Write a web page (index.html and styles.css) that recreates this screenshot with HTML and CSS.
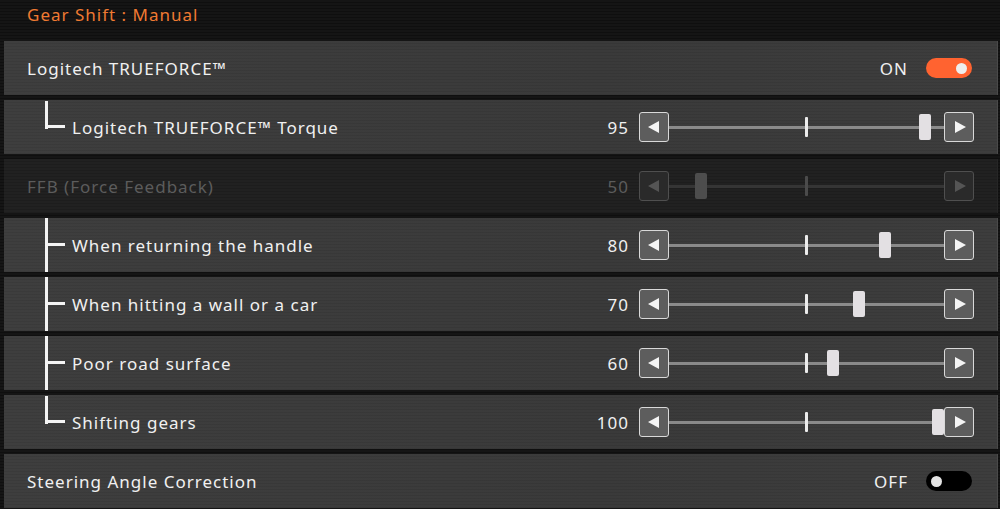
FILE: index.html
```html
<!DOCTYPE html>
<html lang="en">
<head>
<meta charset="utf-8">
<title>Gear Shift</title>
<link rel="stylesheet" href="styles.css">
</head>
<body>
<div class="screen">
  <div class="header">Gear Shift : Manual</div>
  <div class="list">
    <div class="row">
      <span class="label">Logitech TRUEFORCE™</span>
      <div class="toggle-wrap"><span class="state">ON</span><span class="toggle on"><span class="dot"></span></span></div>
    </div>
    <div class="row sub">
      <span class="tree last"></span>
      <span class="label">Logitech TRUEFORCE™ Torque</span>
      <div class="slider"><span class="value">95</span><span class="btn left"></span><span class="track"><span class="tick"></span><span class="thumb" style="--v:95"></span></span><span class="btn right"></span></div>
    </div>
    <div class="row disabled">
      <span class="label">FFB (Force Feedback)</span>
      <div class="slider"><span class="value">50</span><span class="btn left"></span><span class="track"><span class="tick"></span><span class="thumb" style="--v:10"></span></span><span class="btn right"></span></div>
    </div>
    <div class="row sub">
      <span class="tree mid"></span>
      <span class="label">When returning the handle</span>
      <div class="slider"><span class="value">80</span><span class="btn left"></span><span class="track"><span class="tick"></span><span class="thumb" style="--v:80"></span></span><span class="btn right"></span></div>
    </div>
    <div class="row sub">
      <span class="tree mid"></span>
      <span class="label">When hitting a wall or a car</span>
      <div class="slider"><span class="value">70</span><span class="btn left"></span><span class="track"><span class="tick"></span><span class="thumb" style="--v:70"></span></span><span class="btn right"></span></div>
    </div>
    <div class="row sub">
      <span class="tree mid"></span>
      <span class="label">Poor road surface</span>
      <div class="slider"><span class="value">60</span><span class="btn left"></span><span class="track"><span class="tick"></span><span class="thumb" style="--v:60"></span></span><span class="btn right"></span></div>
    </div>
    <div class="row sub">
      <span class="tree last"></span>
      <span class="label">Shifting gears</span>
      <div class="slider"><span class="value">100</span><span class="btn left"></span><span class="track"><span class="tick"></span><span class="thumb" style="--v:100"></span></span><span class="btn right"></span></div>
    </div>
    <div class="row">
      <span class="label">Steering Angle Correction</span>
      <div class="toggle-wrap"><span class="state">OFF</span><span class="toggle off"><span class="dot"></span></span></div>
    </div>
  </div>
</div>
</body>
</html>
```

FILE: styles.css
```css
* { box-sizing: border-box; }
html, body {
  margin: 0;
  padding: 0;
  width: 1000px;
  height: 509px;
  overflow: hidden;
  background: #121212;
}
.screen {
  width: 1000px;
  height: 509px;
  font-family: "Noto Sans", "DejaVu Sans", sans-serif;
  font-size: 17px;
  color: #f0f0f0;
  background: repeating-linear-gradient(to bottom, #151515 0, #151515 2px, #0f0f0f 2px, #0f0f0f 3px);
}
.header {
  height: 41px;
  padding: 3px 0 0 27px;
  line-height: 24px;
  color: #f07a32;
  letter-spacing: 1px;
}
.list {
  display: flex;
  flex-direction: column;
  gap: 5px;
  padding: 0 2px 0 4px;
}
.row {
  height: 54px;
  display: flex;
  align-items: center;
  padding: 0 23px 0 23px;
  background:
    repeating-linear-gradient(to bottom, rgba(0,0,0,0) 0, rgba(0,0,0,0) 2px, rgba(0,0,0,0.07) 2px, rgba(0,0,0,0.07) 3px),
    linear-gradient(to right, #3e3e3e, #3a3a3a 60%, #3d3d3d);
  border-right: 1px solid #4a4a4a;
}
.label {
  flex: 1;
  letter-spacing: 1px;
  white-space: nowrap;
}
.row.sub { padding-left: 41px; }
.tree {
  align-self: stretch;
  width: 27px;
  position: relative;
  flex: none;
}
.tree::before {
  content: "";
  position: absolute;
  left: 0;
  top: 0;
  width: 3px;
  background: #f4f4f4;
}
.tree::after {
  content: "";
  position: absolute;
  left: 0;
  top: 25px;
  width: 20px;
  height: 3px;
  background: #f4f4f4;
}
.tree.mid::before { bottom: 0; }
.tree.last::before { height: 28px; top: 1px; }

/* slider */
.slider {
  display: flex;
  align-items: center;
  height: 30px;
}
.value {
  width: 48px;
  text-align: right;
  margin-right: 10px;
  letter-spacing: 1px;
}
.btn {
  width: 30px;
  height: 30px;
  border: 1.5px solid #d9d9d9;
  border-radius: 3px;
  background: #5d5d5d;
  display: flex;
  align-items: center;
  justify-content: center;
  flex: none;
  position: relative;
  z-index: 1;
}
.btn::after {
  content: "";
  width: 0;
  height: 0;
  border-top: 6.5px solid transparent;
  border-bottom: 6.5px solid transparent;
}
.btn.left::after { border-right: 11px solid #f4f4f4; margin-right: 2px; }
.btn.right::after { border-left: 11px solid #f4f4f4; margin-left: 2px; }
.track {
  width: 275px;
  height: 30px;
  position: relative;
  flex: none;
  display: flex;
  align-items: center;
}
.track::before {
  content: "";
  width: 100%;
  height: 3px;
  background: #8a8a8a;
}
.tick {
  position: absolute;
  left: 136px;
  top: 5px;
  width: 3px;
  height: 20px;
  background: #ececec;
  border-radius: 1px;
}
.thumb {
  position: absolute;
  top: 2px;
  left: calc(var(--v) * 2.63px);
  width: 12px;
  height: 26px;
  border-radius: 2px;
  background: #e3e0e3;
  z-index: 2;
}

/* disabled */
.row.disabled {
  background:
    repeating-linear-gradient(to bottom, rgba(0,0,0,0) 0, rgba(0,0,0,0) 2px, rgba(0,0,0,0.12) 2px, rgba(0,0,0,0.12) 3px),
    #212121;
  border-right-color: #262626;
  color: #5c5c5c;
}
.disabled .btn { border-color: #4f4f4f; background: #2a2a2a; }
.disabled .btn.left::after { border-right-color: #555; }
.disabled .btn.right::after { border-left-color: #555; }
.disabled .track::before { background: #353535; }
.disabled .tick { background: #4b4b4b; }
.disabled .thumb { background: #4d4d4d; }

/* toggle */
.toggle-wrap {
  display: flex;
  align-items: center;
  gap: 18px;
  padding-right: 2px;
}
.state { letter-spacing: 1px; }
.toggle {
  width: 46px;
  height: 20px;
  border-radius: 10px;
  display: flex;
  align-items: center;
  padding: 0 5px;
}
.toggle.on { background: #ff6330; justify-content: flex-end; }
.toggle.off { background: #000; justify-content: flex-start; }
.dot {
  width: 11px;
  height: 11px;
  border-radius: 50%;
  background: #eeeeee;
}
.toggle.off .dot { background: #e4e4e4; }
```
